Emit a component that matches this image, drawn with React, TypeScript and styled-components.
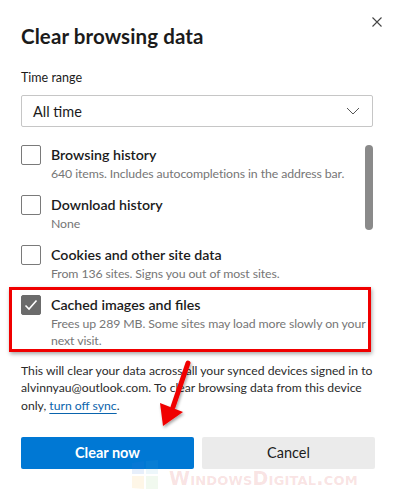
import React from "react";
import styled, { createGlobalStyle } from "styled-components";

const Global = createGlobalStyle`
  html, body { margin: 0; padding: 0; background: #fff; }
  body { font-family: "Segoe UI", Lato, "Noto Sans", sans-serif; color: #1b1b1b; }
  * { box-sizing: border-box; }
`;

const Dialog = styled.div`
  position: relative;
  width: 396px;
  height: 489px;
  background: #fff;
  overflow: hidden;
  padding: 24px 23px 0 21px;
  display: flex;
  flex-direction: column;
`;

const Close = styled.div`
  position: absolute;
  top: 12px;
  right: 13px;
  width: 12px;
  height: 12px;
`;

const Title = styled.h1`
  margin: 0;
  font-size: 20.5px;
  line-height: 24px;
  font-weight: 700;
  letter-spacing: 0.1px;
  color: #1b1b1b;
`;

const Label = styled.div`
  margin-top: 21px;
  font-size: 12.5px;
  line-height: 18px;
  color: #1b1b1b;
`;

const Select = styled.div`
  margin-top: 8px;
  height: 32px;
  border: 1px solid #c6c6c6;
  border-radius: 2px;
  display: flex;
  align-items: center;
  justify-content: space-between;
  padding: 0 12px 0 11px;
  font-size: 14.5px;
  color: #1b1b1b;
`;

const List = styled.div`
  position: relative;
  margin-top: 18px;
  display: flex;
  flex-direction: column;
  gap: 13px;
`;

const ScrollThumb = styled.div`
  position: absolute;
  right: 0;
  top: 0;
  width: 8px;
  height: 85px;
  border-radius: 4px;
  background: #8a8a8a;
`;

const Row = styled.div<{ $wide?: boolean }>`
  display: flex;
  align-items: flex-start;
  gap: 10px;
  padding-right: ${(p) => (p.$wide ? "0" : "6px")};
`;

const Box = styled.div<{ $checked?: boolean }>`
  flex: none;
  width: 20px;
  height: 20px;
  border-radius: 2px;
  border: 1px solid ${(p) => (p.$checked ? "#6b6b6b" : "#7a7a7a")};
  background: ${(p) => (p.$checked ? "#6b6b6b" : "#fff")};
  display: flex;
  align-items: center;
  justify-content: center;
`;

const Texts = styled.div`
  display: flex;
  flex-direction: column;
`;

const ItemTitle = styled.div`
  font-size: 14.2px;
  line-height: 20px;
  font-weight: 600;
  color: #1b1b1b;
`;

const ItemSub = styled.div`
  font-size: 12.3px;
  line-height: 17px;
  letter-spacing: -0.1px;
  color: #767676;
`;

const Highlight = styled.div`
  margin: -8px 2px -2px -12px;
  padding: 5px 0 0 9px;
  border: 3px solid #f00000;
  box-shadow: 1px 2px 4px rgba(0, 0, 0, 0.35);
`;

const Para = styled.p`
  margin: 12px 0 0;
  font-size: 12.2px;
  line-height: 17.3px;
  color: #2b2b2b;
`;

const Link = styled.a`
  color: #0a64ad;
  text-decoration: underline;
  text-underline-offset: 3px;
`;

const Buttons = styled.div`
  margin-top: 23px;
  display: grid;
  grid-template-columns: 1fr 1fr;
  gap: 8px;
  margin-right: -2px;
`;

const Button = styled.button<{ $primary?: boolean }>`
  height: 32px;
  border: none;
  border-radius: 2px;
  font-family: inherit;
  font-size: 14.5px;
  font-weight: ${(p) => (p.$primary ? 700 : 400)};
  background: ${(p) => (p.$primary ? "#0078d4" : "#ebebeb")};
  color: ${(p) => (p.$primary ? "#fff" : "#1b1b1b")};
`;

const Arrow = styled.svg`
  position: absolute;
  left: 150px;
  top: 355px;
  overflow: visible;
`;

const Watermark = styled.div`
  position: absolute;
  left: 130px;
  top: 460px;
  display: flex;
  align-items: center;
  gap: 9px;
  pointer-events: none;
`;

const WaterText = styled.span`
  font-family: "DejaVu Sans", sans-serif;
  font-weight: 700;
  font-size: 19px;
  font-variant: small-caps;
  letter-spacing: 0.2px;
  color: rgba(210, 40, 40, 0.14);
  margin-top: 6px;
`;

const items = [
  { title: "Browsing history", sub: "640 items. Includes autocompletions in the address bar." },
  { title: "Download history", sub: "None" },
  { title: "Cookies and other site data", sub: "From 136 sites. Signs you out of most sites." },
];

export default function App() {
  return (
    <>
      <Global />
      <Dialog>
        <Close>
          <svg width="12" height="12" viewBox="0 0 12 12">
            <path d="M1.5 1.5L10.5 10.5M10.5 1.5L1.5 10.5" stroke="#444" strokeWidth="1.1" />
          </svg>
        </Close>
        <Title>Clear browsing data</Title>
        <Label>Time range</Label>
        <Select>
          <span>All time</span>
          <svg width="14" height="8" viewBox="0 0 14 8">
            <path d="M1 1l6 6 6-6" fill="none" stroke="#555" strokeWidth="1" />
          </svg>
        </Select>
        <List>
          <ScrollThumb />
          {items.map((it) => (
            <Row key={it.title}>
              <Box />
              <Texts>
                <ItemTitle>{it.title}</ItemTitle>
                <ItemSub>{it.sub}</ItemSub>
              </Texts>
            </Row>
          ))}
          <Highlight>
            <Row $wide>
              <Box $checked>
                <svg width="14" height="12" viewBox="0 0 14 12">
                  <path d="M1.5 6.5l3.5 3.5 7.5-8.5" fill="none" stroke="#fff" strokeWidth="1.6" />
                </svg>
              </Box>
              <Texts>
                <ItemTitle>Cached images and files</ItemTitle>
                <ItemSub>Frees up 289 MB. Some sites may load more slowly on your next visit.</ItemSub>
              </Texts>
            </Row>
          </Highlight>
        </List>
        <Para>
          This will clear your data across all your synced devices signed in to alvinnyau@outlook.com. To clear browsing data from this device only, <Link>turn off sync</Link>.
        </Para>
        <Buttons>
          <Button $primary>Clear now</Button>
          <Button>Cancel</Button>
        </Buttons>
        <Arrow width="50" height="80" viewBox="0 0 50 80">
          <defs>
            <filter id="sh" x="-50%" y="-50%" width="200%" height="200%">
              <feDropShadow dx="1" dy="2" stdDeviation="1.5" floodColor="#000" floodOpacity="0.35" />
            </filter>
          </defs>
          <g filter="url(#sh)">
            <path d="M38 8 L23 52" stroke="#f00000" strokeWidth="5" strokeLinecap="round" />
            <path d="M10 48 L33 57 L13 71 Z" fill="#f00000" />
          </g>
        </Arrow>
        <Watermark>
          <svg width="30" height="30" viewBox="0 0 30 30">
            <polygon points="2,3 14,1 14,14 2,14" fill="rgba(60,120,220,0.12)" />
            <polygon points="16,1 28,0 28,14 16,14" fill="rgba(80,180,220,0.1)" />
            <polygon points="2,16 14,16 14,29 2,28" fill="rgba(250,180,60,0.12)" />
            <polygon points="16,16 28,16 28,30 16,29" fill="rgba(120,200,100,0.1)" />
          </svg>
          <WaterText>WindowsDigital.com</WaterText>
        </Watermark>
      </Dialog>
    </>
  );
}
